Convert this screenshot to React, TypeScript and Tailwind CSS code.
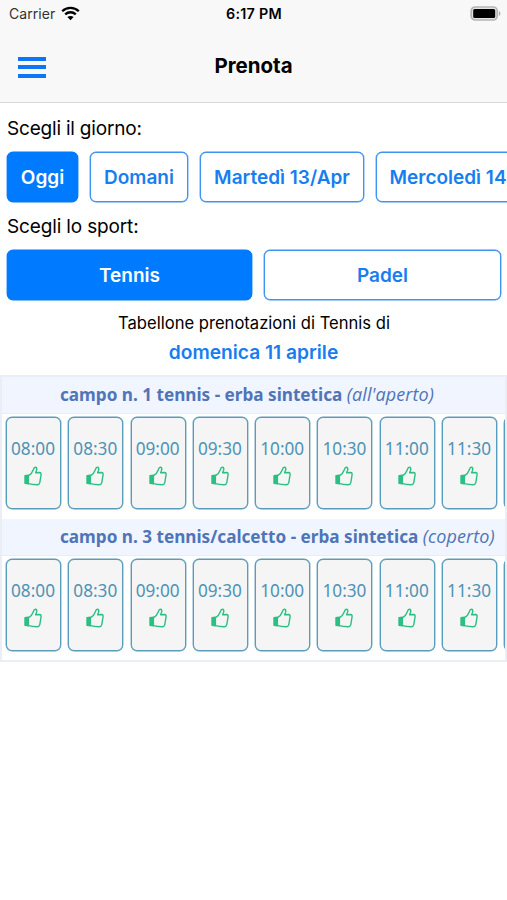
import clsx from 'clsx';

const days = [
  { label: 'Oggi', width: 'w-[71px]' },
  { label: 'Domani', width: 'w-[98px]' },
  { label: 'Martedì 13/Apr', width: 'w-[164px]' },
  { label: 'Mercoledì 14/Apr', width: 'w-[184px]' },
];

const sports = [
  { label: 'Tennis', width: 'w-[245px]' },
  { label: 'Padel', width: 'w-[237px]' },
];

const slots = ['08:00', '08:30', '09:00', '09:30', '10:00', '10:30', '11:00', '11:30', '12:00'];

const courts = [
  { name: 'campo n. 1 tennis - erba sintetica', type: "(all'aperto)" },
  { name: 'campo n. 3 tennis/calcetto - erba sintetica', type: '(coperto)' },
];

function WifiIcon() {
  return (
    <svg width="19" height="15" viewBox="0 0 19 15" fill="none" stroke="#000" strokeWidth="2.3">
      <path d="M1.2 5.2C5.8 .7 13.2 .7 17.8 5.2" />
      <path d="M4.2 8.4C7.2 5.5 11.8 5.5 14.8 8.4" />
      <path d="M9.5 14.3L6.4 11.1C8.2 9.5 10.8 9.5 12.6 11.1Z" fill="#000" stroke="none" />
    </svg>
  );
}

function BatteryIcon() {
  return (
    <svg width="31" height="15" viewBox="0 0 31 15">
      <rect x="1.2" y="1" width="26" height="13" rx="4" fill="#e4e4e4" stroke="#b5b5b5" strokeWidth="1.7" />
      <rect x="3.2" y="3" width="22" height="9" rx="1.5" fill="#000" />
      <path d="M28.8 5v5c2.2-.8 2.2-4.2 0-5z" fill="#b0b0b0" />
    </svg>
  );
}

function ThumbIcon() {
  return (
    <svg width="18" height="20" viewBox="0 0 18 20" fill="none" stroke="#2bbf83" strokeWidth="1.4" strokeLinejoin="round">
      <path d="M1 9.8L4.4 9.3V17.8L1 17.3Z" fill="#2bbf83" />
      <path d="M4.6 9.6C7 8.3 8.4 6.4 9.2 4C9.7 2.4 10.1 1.2 11.3 1.2C12.9 1.2 13 2.8 12.6 4.3L11.6 6.8L15.6 6.5C17.1 6.6 17.3 7.8 17 9.1L15.8 16.6C15.4 18.1 14.6 18.8 13.1 18.8C10.2 18.7 7.5 18.5 4.6 17.6" />
    </svg>
  );
}

function ChoiceButton({ label, width, active }: { label: string; width: string; active: boolean }) {
  return (
    <button
      className={clsx(
        'h-[50px] shrink-0 rounded-md border pt-[3px] text-[19px] font-semibold whitespace-nowrap',
        width,
        active
          ? 'border-[#007aff] bg-[#007aff] text-white shadow-[0_0_0_0.4px_#007aff]'
          : 'border-[#3f94f0] bg-white text-[#177ef0] shadow-[0_0_0_0.4px_#3f94f0]'
      )}
    >
      {label}
    </button>
  );
}

export default function App() {
  return (
    <div className="h-[900px] w-[507px] overflow-hidden bg-white font-['Inter',sans-serif] text-black">
      <header className="h-[103px] border-b border-[#d9d9d9] bg-[#f8f8f8]">
        {/* Status bar */}
        <div className="grid h-[27px] grid-cols-3 items-center pr-1.5 pl-[9px] text-[14px]">
          <div className="flex items-center gap-1.5 text-[#333]">
            <span className="tracking-[0.05px]">Carrier</span>
            <WifiIcon />
          </div>
          <span className="pr-0.5 text-center text-[14.3px] font-semibold tracking-[0.3px]">6:17 PM</span>
          <div className="flex justify-end">
            <BatteryIcon />
          </div>
        </div>

        {/* Nav bar */}
        <div className="grid h-[76px] grid-cols-3 items-center px-[17.5px]">
          <div className="flex w-7 flex-col gap-[4.5px] pt-1">
            <span className="h-1 bg-[#0f76f5]" />
            <span className="h-1 bg-[#0f76f5]" />
            <span className="h-1 bg-[#0f76f5]" />
          </div>
          <h1 className="pt-0.5 text-center text-[20.5px] font-bold">Prenota</h1>
        </div>
      </header>

      <main>
        <p className="flex h-[49px] items-center pt-1 pl-[7px] text-[19px] tracking-[-0.2px]">Scegli il giorno:</p>
        <div className="flex gap-3 overflow-x-clip pl-[7px]">
          {days.map((day, i) => (
            <ChoiceButton key={day.label} {...day} active={i === 0} />
          ))}
        </div>

        <p className="flex h-[48px] items-center pt-0.5 pl-[7px] text-[19px] tracking-[-0.15px]">Scegli lo sport:</p>
        <div className="flex gap-3 pl-[7px]">
          {sports.map((sport, i) => (
            <ChoiceButton key={sport.label} {...sport} active={i === 0} />
          ))}
        </div>

        <div className="h-[75px] pt-2.5 text-center">
          <p className="pl-px text-[16.6px] leading-[26px]">Tabellone prenotazioni di Tennis di</p>
          <p className="text-[19.2px] leading-[32px] font-semibold text-[#177ef0]">domenica 11 aprile</p>
        </div>

        <div className="h-[287px] overflow-hidden border-2 border-[#ebeef4] font-['Noto_Sans',sans-serif]">
          {courts.map((court) => (
            <section key={court.name}>
              <h2 className="h-[37px] border-b border-[#e9edf5] bg-[#f0f5ff] pl-[58px] text-[17.15px] leading-[35px] whitespace-nowrap text-[#4f74b8]">
                <span className="font-bold">{court.name}</span>{' '}
                <em className="font-['Open_Sans',sans-serif] text-[18px] tracking-[0.1px]">{court.type}</em>
              </h2>
              <div className="flex h-[105px] gap-[7.3px] pt-[3px] pl-1">
                {slots.map((slot) => (
                  <div
                    key={slot}
                    className="flex h-[92px] w-[55px] shrink-0 flex-col items-center rounded-md border border-[#5a9dba] bg-[#f5f5f5] pt-[20px] pr-px shadow-[0_0_0_0.4px_#5a9dba]"
                  >
                    <span className="text-[17.2px] leading-[22px] text-[#4f93b5]">{slot}</span>
                    <span className="mt-1.5">
                      <ThumbIcon />
                    </span>
                  </div>
                ))}
              </div>
            </section>
          ))}
        </div>
      </main>
    </div>
  );
}
